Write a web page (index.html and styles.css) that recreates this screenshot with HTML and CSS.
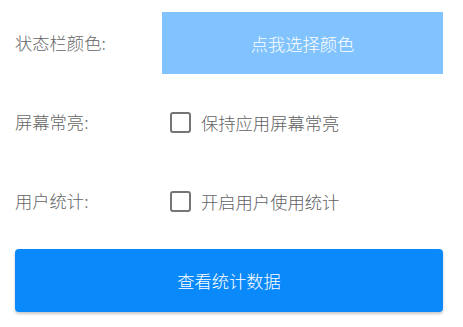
FILE: index.html
```html
<!DOCTYPE html>
<html lang="zh">
<head>
<meta charset="utf-8">
<link rel="stylesheet" href="styles.css">
</head>
<body>
<div class="page">
  <div class="row row-color">
    <div class="label">状态栏颜色:</div>
    <div class="color-btn">点我选择颜色</div>
  </div>
  <div class="row row-check first">
    <div class="label">屏幕常亮:</div>
    <div class="check"><span class="box"></span><span class="check-text">保持应用屏幕常亮</span></div>
  </div>
  <div class="row row-check second">
    <div class="label">用户统计:</div>
    <div class="check"><span class="box"></span><span class="check-text">开启用户使用统计</span></div>
  </div>
  <div class="main-btn">查看统计数据</div>
</div>
</body>
</html>
```

FILE: styles.css
```css
html, body {
  margin: 0;
  padding: 0;
  background: #ffffff;
}
body {
  font-family: "Noto Sans CJK SC", "Noto Sans", sans-serif;
  font-size: 17.3px;
  font-weight: 300;
  width: 463px;
  height: 327px;
  overflow: hidden;
}
.page {
  padding: 12px 20px 0 15px;
}
.row {
  display: flex;
  align-items: center;
}
.label {
  width: 147px;
  flex: none;
  color: #666666;
  line-height: 24px;
}
.color-btn {
  flex: 1;
  height: 62px;
  background: #80c3fe;
  color: #ffffff;
  display: flex;
  align-items: center;
  justify-content: center;
}
.row-check {
  height: 48px;
}
.row-check.first {
  margin-top: 24px;
}
.row-check.second {
  margin-top: 31px;
}
.check {
  display: flex;
  align-items: center;
  margin-left: 8px;
}
.box {
  width: 17px;
  height: 17px;
  border: 2.5px solid #757575;
  border-radius: 3px;
  flex: none;
}
.check-text {
  margin-left: 10px;
  color: #626262;
}
.main-btn {
  margin-top: 24px;
  height: 63px;
  background: #0a89fb;
  color: #ffffff;
  border-radius: 4px;
  box-shadow: 0 2px 3px rgba(0, 0, 0, 0.22);
  display: flex;
  align-items: center;
  justify-content: center;
}
```
